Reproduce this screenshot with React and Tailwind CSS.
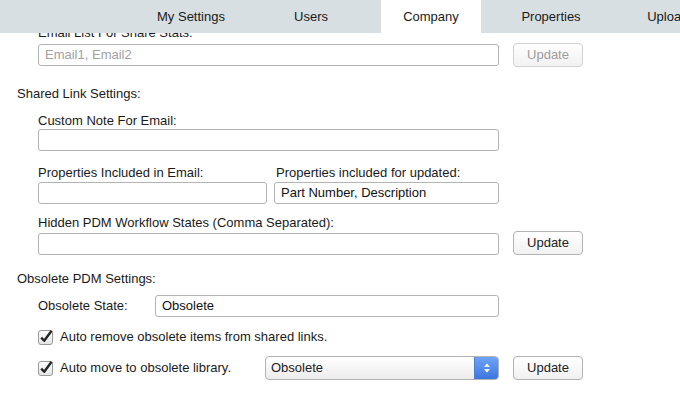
import React from "react";

const tabs = ["My Settings", "Users", "Company", "Properties", "Uploads"];

function Checkbox() {
  return (
    <svg width="16" height="16" viewBox="0 0 16 16" className="shrink-0">
      <defs>
        <linearGradient id="cbg" x1="0" y1="0" x2="0" y2="1">
          <stop offset="0" stopColor="#ffffff" />
          <stop offset="1" stopColor="#e4e4e4" />
        </linearGradient>
      </defs>
      <rect x="0.5" y="1.5" width="14" height="14" rx="2.5" fill="url(#cbg)" stroke="#9a9a9a" />
      <path d="M3.2 8.6 L6.2 11.8 L13.6 1.8" fill="none" stroke="#262626" strokeWidth="2.4" strokeLinejoin="round" />
    </svg>
  );
}

function TextInput({ value, placeholder, className }) {
  return (
    <div
      className={
        "h-[22px] border border-[#b3b3b3] rounded-[3px] bg-white px-[6px] flex items-center text-[13px] " +
        className
      }
    >
      {value ? (
        <span className="text-[#111]">{value}</span>
      ) : (
        <span className="text-[#a2a2a2]">{placeholder}</span>
      )}
    </div>
  );
}

function UpdateButton({ disabled }) {
  return (
    <button
      className={
        "w-[70px] h-[24px] rounded-[4px] border bg-gradient-to-b from-white to-[#f1f1f1] text-[13px] ml-[14px] " +
        (disabled ? "border-[#d2d2d2] text-[#9d9d9d]" : "border-[#b3b3b3] text-[#222]")
      }
    >
      Update
    </button>
  );
}

export default function App() {
  return (
    <div
      className="relative w-[680px] h-[395px] overflow-hidden bg-white text-[13px] leading-[16px] text-[#1a1a1a]"
      style={{ fontFamily: '"Liberation Sans", Arial, Helvetica, sans-serif' }}
    >
      <div className="absolute top-0 left-0 right-0 h-[33px] bg-[#d7dfe2] flex pl-[141px] gap-[20px] z-10">
        {tabs.map((t) => (
          <div
            key={t}
            className={
              "w-[100px] shrink-0 flex items-center justify-center pt-[1px] text-[13px] text-[#1a1a1a] " +
              (t === "Company" ? "bg-white" : "")
            }
          >
            {t}
          </div>
        ))}
      </div>

      <div className="pt-[25px] pl-[17px]">
        <div className="pl-[21px]">
          <div>Email List For Share Stats:</div>
          <div className="flex items-center mt-[2px]">
            <TextInput placeholder="Email1, Email2" className="w-[461px]" />
            <UpdateButton disabled />
          </div>
        </div>

        <div className="mt-[19px]">Shared Link Settings:</div>
        <div className="pl-[21px]">
          <div className="mt-[11px]">Custom Note For Email:</div>
          <TextInput className="w-[461px]" />

          <div className="flex mt-[14px] gap-[7px]">
            <div className="w-[229px]">
              <div>Properties Included in Email:</div>
              <TextInput className="w-[229px] mt-[1px]" />
            </div>
            <div className="w-[225px]">
              <div className="pl-[2px]">Properties included for updated:</div>
              <TextInput value="Part Number, Description" className="w-[225px] mt-[1px]" />
            </div>
          </div>

          <div className="mt-[11px]">Hidden PDM Workflow States (Comma Separated):</div>
          <div className="flex items-center">
            <TextInput className="w-[461px] mt-[2px]" />
            <UpdateButton />
          </div>
        </div>

        <div className="mt-[16px]">Obsolete PDM Settings:</div>
        <div className="pl-[21px]">
          <div className="flex items-center mt-[8px]">
            <div className="w-[117px]">Obsolete State:</div>
            <TextInput value="Obsolete" className="w-[344px]" />
          </div>

          <div className="flex items-center mt-[12px] gap-[6px]">
            <Checkbox />
            <span>Auto remove obsolete items from shared links.</span>
          </div>

          <div className="flex items-center mt-[11px]">
            <div className="w-[227px] flex items-center gap-[6px]">
              <Checkbox />
              <span>Auto move to obsolete library.</span>
            </div>
            <div className="w-[234px] h-[24px] flex rounded-[4px] border border-[#b3b3b3] overflow-hidden bg-gradient-to-b from-white to-[#ececec]">
              <div className="flex-1 flex items-center pl-[5px] text-[#222]">Obsolete</div>
              <div className="w-[24px] flex items-center justify-center bg-gradient-to-b from-[#6ea4f5] to-[#3c76dd] border-l border-[#4a7fd8]">
                <svg width="8" height="12" viewBox="0 0 8 12">
                  <path d="M4 1.5 L7 4.8 H1 Z" fill="#ffffff" />
                  <path d="M4 10.5 L7 7.2 H1 Z" fill="#ffffff" />
                </svg>
              </div>
            </div>
            <UpdateButton />
          </div>
        </div>
      </div>
    </div>
  );
}
